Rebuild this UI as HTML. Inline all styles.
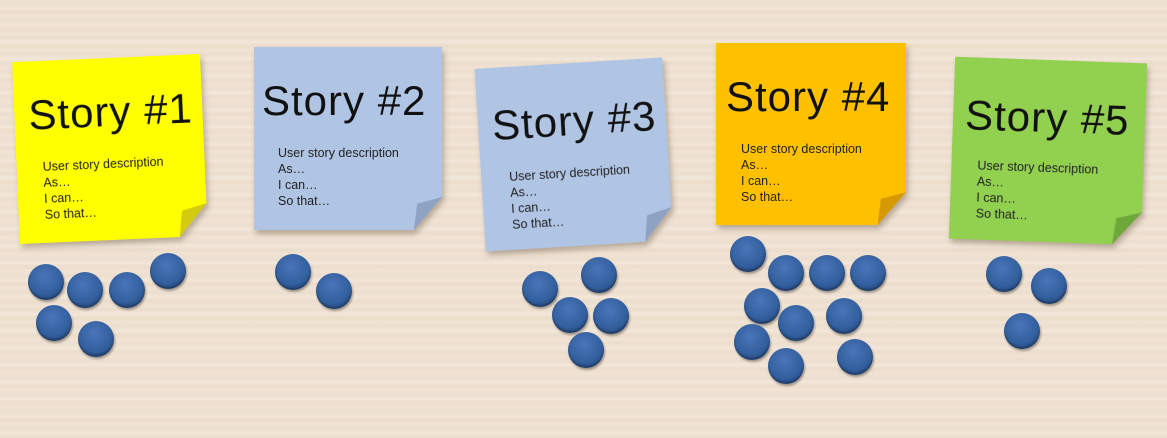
<!DOCTYPE html>
<html><head><meta charset="utf-8"><style>
body{margin:0;width:1167px;height:438px;overflow:hidden;position:relative;
background:repeating-linear-gradient(180deg,#f0e3d4 0px,#eddfcf 4px,#f2e7da 8px,#ecdccb 12px,#f1e4d5 17px);
font-family:"Liberation Sans",sans-serif;}
.n{position:absolute;filter:drop-shadow(2px 4px 3px rgba(80,60,40,.35));}
.p{position:absolute;inset:0;clip-path:polygon(0 0,100% 0,100% 82%,85% 100%,0 100%);}
.f{position:absolute;right:0;bottom:0;width:15%;height:18%;clip-path:polygon(100% 0,0 100%,12% 20%);}
.t{position:absolute;font-size:42px;color:#111;white-space:nowrap;letter-spacing:1px}
.d{position:absolute;font-size:12.5px;line-height:16px;color:#222}
.c{position:absolute;width:36px;height:36px;border-radius:50%;margin:-18px 0 0 -18px;
background:radial-gradient(circle at 45% 35%,#4a75b8 0,#33609f 55%,#223f73 100%);
box-shadow:1px 2px 2px rgba(0,0,0,.35), inset 0 -2px 2px rgba(0,0,0,.3);}
</style></head><body>

<div class="n" style="left:16px;top:58px;width:188px;height:182px;transform:rotate(-2.5deg)">
<div class="p" style="background:#ffff00"></div><div class="f" style="background:#d4cb10"></div>
<div class="t" style="left:14px;top:30px">Story #1</div>
<div class="d" style="left:26px;top:98px">User story description<br>As…<br>I can…<br>So that…</div></div>

<div class="n" style="left:254px;top:47px;width:188px;height:183px">
<div class="p" style="background:#b0c4e4"></div><div class="f" style="background:#8ea2c4"></div>
<div class="t" style="left:8px;top:30px">Story #2</div>
<div class="d" style="left:24px;top:98px">User story description<br>As…<br>I can…<br>So that…</div></div>

<div class="n" style="left:480px;top:63px;width:188px;height:183px;transform:rotate(-3.5deg)">
<div class="p" style="background:#b0c4e4"></div><div class="f" style="background:#8ea2c4"></div>
<div class="t" style="left:14px;top:34px">Story #3</div>
<div class="d" style="left:28px;top:102px">User story description<br>As…<br>I can…<br>So that…</div></div>

<div class="n" style="left:716px;top:43px;width:190px;height:182px">
<div class="p" style="background:#ffc000"></div><div class="f" style="background:#d49a00"></div>
<div class="t" style="left:10px;top:30px">Story #4</div>
<div class="d" style="left:25px;top:98px">User story description<br>As…<br>I can…<br>So that…</div></div>

<div class="n" style="left:952px;top:60px;width:192px;height:182px;transform:rotate(2deg)">
<div class="p" style="background:#92d050"></div><div class="f" style="background:#6fa83a"></div>
<div class="t" style="left:12px;top:34px">Story #5</div>
<div class="d" style="left:26px;top:100px">User story description<br>As…<br>I can…<br>So that…</div></div>

<div class="c" style="left:46px;top:282px"></div><div class="c" style="left:85px;top:290px"></div>
<div class="c" style="left:127px;top:290px"></div><div class="c" style="left:168px;top:271px"></div>
<div class="c" style="left:54px;top:323px"></div><div class="c" style="left:96px;top:339px"></div>

<div class="c" style="left:293px;top:272px"></div><div class="c" style="left:334px;top:291px"></div>

<div class="c" style="left:540px;top:289px"></div><div class="c" style="left:599px;top:275px"></div>
<div class="c" style="left:570px;top:315px"></div><div class="c" style="left:611px;top:316px"></div>
<div class="c" style="left:586px;top:350px"></div>

<div class="c" style="left:748px;top:254px"></div><div class="c" style="left:786px;top:273px"></div>
<div class="c" style="left:827px;top:273px"></div><div class="c" style="left:868px;top:273px"></div>
<div class="c" style="left:762px;top:306px"></div><div class="c" style="left:796px;top:323px"></div>
<div class="c" style="left:844px;top:316px"></div><div class="c" style="left:752px;top:342px"></div>
<div class="c" style="left:786px;top:366px"></div><div class="c" style="left:855px;top:357px"></div>

<div class="c" style="left:1004px;top:274px"></div><div class="c" style="left:1049px;top:286px"></div>
<div class="c" style="left:1022px;top:331px"></div>
</body></html>
